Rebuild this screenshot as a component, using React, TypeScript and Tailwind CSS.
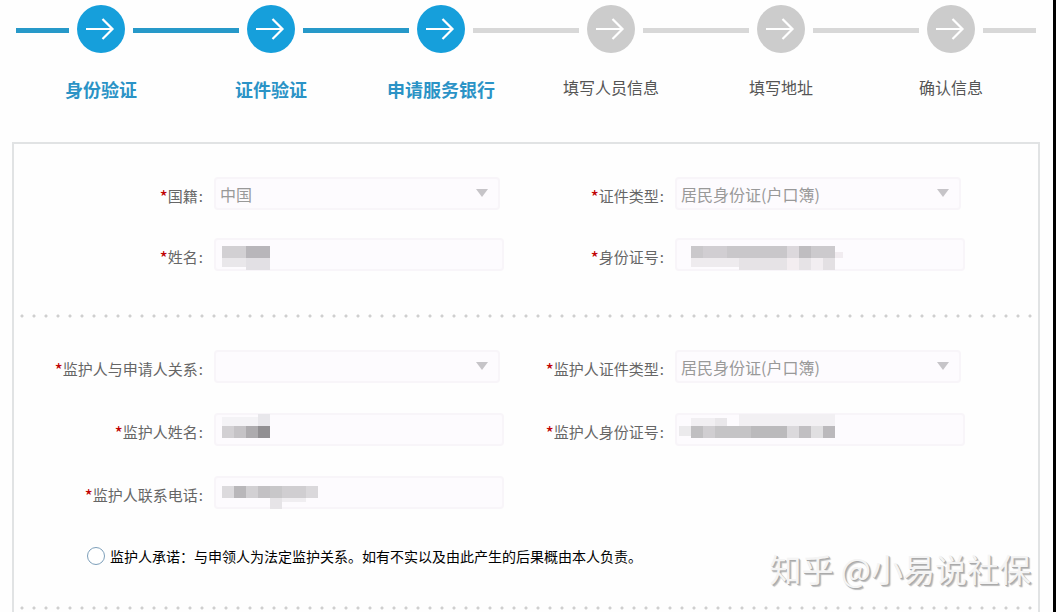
import { useState } from "react";
import clsx from "clsx";

interface Step {
  label: string;
  done: boolean;
}

// x, y, width, height, fill
type Block = [number, number, number, number, string];

const steps: Step[] = [
  { label: "身份验证", done: true },
  { label: "证件验证", done: true },
  { label: "申请服务银行", done: true },
  { label: "填写人员信息", done: false },
  { label: "填写地址", done: false },
  { label: "确认信息", done: false },
];

const nameMask: Block[] = [
  [8, 8, 24, 12, "#d2d0d3"],
  [32, 8, 24, 12, "#b8b6ba"],
  [8, 20, 24, 9, "#e9e7ea"],
  [32, 20, 24, 12, "#e2e0e4"],
];

const idMask: Block[] = [
  [16, 8, 12, 12, "#cac8cb"],
  [28, 8, 24, 12, "#d1ced2"],
  [52, 8, 60, 12, "#c9c7ca"],
  [112, 8, 12, 12, "#dcd8dc"],
  [124, 8, 12, 12, "#bfbdc0"],
  [136, 8, 24, 12, "#cccacd"],
  [160, 14, 8, 6, "#f1ecf0"],
  [16, 20, 48, 9, "#eeebee"],
  [64, 20, 48, 12, "#e6e3e6"],
  [112, 20, 12, 12, "#f3edf0"],
  [124, 20, 12, 12, "#e6e3e6"],
  [136, 20, 12, 12, "#f2eef1"],
  [148, 20, 12, 12, "#e3e0e3"],
];

const guardianNameMask: Block[] = [
  [8, 4, 36, 9, "#f4f3f6"],
  [44, 1, 12, 12, "#e8e7eb"],
  [8, 13, 12, 12, "#d2d0d3"],
  [20, 13, 12, 12, "#c5c3c6"],
  [32, 13, 12, 12, "#adabae"],
  [44, 13, 12, 12, "#918f92"],
];

const guardianIdMask: Block[] = [
  [16, 5, 24, 8, "#f1eff2"],
  [40, 5, 12, 8, "#e9e7ea"],
  [64, 1, 96, 12, "#f2f0f3"],
  [4, 13, 12, 10, "#ebeaec"],
  [16, 13, 12, 12, "#c0bfc1"],
  [28, 13, 12, 12, "#d0ced1"],
  [40, 13, 36, 12, "#c5c4c6"],
  [76, 13, 36, 12, "#bbbabc"],
  [112, 13, 12, 12, "#dbd9dc"],
  [124, 13, 12, 12, "#c1bfc2"],
  [136, 13, 12, 12, "#e0dfe1"],
  [148, 13, 12, 12, "#bbb9bc"],
];

const phoneMask: Block[] = [
  [8, 10, 12, 12, "#dcdadd"],
  [20, 10, 12, 12, "#b9b7ba"],
  [32, 10, 12, 12, "#d2d0d3"],
  [44, 10, 12, 12, "#c3c1c4"],
  [56, 10, 12, 12, "#c8c7c9"],
  [68, 10, 24, 12, "#d0ced1"],
  [92, 10, 12, 12, "#dad8db"],
  [56, 22, 12, 12, "#e6e4e7"],
  [68, 22, 24, 4, "#f0eef1"],
];

function StepLine({ active }: { active: boolean }) {
  return <span className={clsx("mt-[3px] h-[5px] flex-1", active ? "bg-[#2799c9]" : "bg-[#d8d8d8]")} />;
}

function StepItem({ step, nextDone }: { step: Step; nextDone: boolean }) {
  return (
    <li className="flex flex-col items-center">
      <div className="flex w-full items-center gap-2">
        <StepLine active={step.done} />
        <span
          className={clsx(
            "flex size-12 items-center justify-center rounded-full",
            step.done ? "bg-[#169fdb]" : "bg-[#cccccc]"
          )}
        >
          <svg viewBox="0 0 32 22" className="h-[22px] w-8" fill="none" stroke="#fff" strokeWidth="2.2">
            <path d="M1 11H27M17.5 1L27.5 11L17.5 21" />
          </svg>
        </span>
        <StepLine active={nextDone} />
      </div>
      <span
        className={clsx(
          step.done ? "mt-6 text-lg leading-6 font-bold text-[#2b93c6]" : "mt-[22px] text-base leading-6 text-[#555]"
        )}
      >
        {step.label}
      </span>
    </li>
  );
}

function FieldLabel({ htmlFor, text }: { htmlFor: string; text: string }) {
  return (
    <label
      htmlFor={htmlFor}
      className="flex justify-end pt-[5px] pr-[11px] text-[15px] leading-5 whitespace-nowrap text-[#666]"
    >
      <span className="text-lg leading-5 text-[#c00000]">*</span>
      <span className="pr-px">{text}</span>:
    </label>
  );
}

function SelectField({ id, label, value }: { id: string; label: string; value: string }) {
  return (
    <>
      <FieldLabel htmlFor={id} text={label} />
      <div className="relative mr-1">
        <select
          id={id}
          defaultValue={value}
          className="h-[33px] w-full appearance-none rounded-sm border-2 border-[#f8f5f9] bg-[#fdfbfe] px-1 text-base text-[#999] outline-none"
        >
          <option value={value}>{value}</option>
        </select>
        <svg viewBox="0 0 12 8" className="pointer-events-none absolute top-3 right-3 h-2 w-3" fill="#c6c4c8">
          <path d="M0 0H12L6 8Z" />
        </svg>
      </div>
    </>
  );
}

function MaskedField({ id, label, mask }: { id: string; label: string; mask: Block[] }) {
  return (
    <>
      <FieldLabel htmlFor={id} text={label} />
      <div className="relative">
        <input
          id={id}
          type="text"
          className="h-[33px] w-full rounded-sm border-2 border-[#f8f5f9] bg-[#fdfbfe] px-1 text-base text-[#999] outline-none"
        />
        <svg className="pointer-events-none absolute inset-0 h-full w-full" shapeRendering="crispEdges">
          {mask.map(([x, y, width, height, fill]) => (
            <rect key={`${x}-${y}`} x={x} y={y} width={width} height={height} fill={fill} />
          ))}
        </svg>
      </div>
    </>
  );
}

function DottedDivider() {
  return (
    <hr className="mx-0.5 h-1 border-0 bg-[radial-gradient(circle,#cfcfcf_1px,transparent_2px)] bg-[length:12px_4px]" />
  );
}

export default function App() {
  const [agreed, setAgreed] = useState(false);

  return (
    <main className="relative flex min-h-screen flex-col border-r-[3px] border-black bg-[#fefefe] pt-[5px] font-['Noto_Sans_CJK_SC',sans-serif]">
      {/* Progress */}
      <ol className="grid grid-cols-6 pr-[17px] pl-4">
        {steps.map((step, i) => (
          <StepItem key={step.label} step={step} nextDone={steps[i + 1]?.done ?? false} />
        ))}
      </ol>

      <form className="mt-[41px] mr-[13px] ml-3 flex-1 border-2 border-b-0 border-[#e1e3e4] bg-[#fefefe]">
        {/* Applicant */}
        <div className="grid grid-cols-[200px_1fr_171px_1fr] items-center gap-y-7 pt-[33px] pr-[73px]">
          <SelectField id="nationality" label="国籍" value="中国" />
          <SelectField id="idType" label="证件类型" value="居民身份证(户口簿)" />
          <MaskedField id="name" label="姓名" mask={nameMask} />
          <MaskedField id="idNumber" label="身份证号" mask={idMask} />
        </div>

        <div className="pt-[43px] pb-8">
          <DottedDivider />
        </div>

        {/* Guardian */}
        <div className="grid grid-cols-[200px_1fr_171px_1fr] items-center gap-y-[30px] pr-[73px]">
          <SelectField id="relation" label="监护人与申请人关系" value="" />
          <SelectField id="guardianIdType" label="监护人证件类型" value="居民身份证(户口簿)" />
          <MaskedField id="guardianName" label="监护人姓名" mask={guardianNameMask} />
          <MaskedField id="guardianIdNumber" label="监护人身份证号" mask={guardianIdMask} />
          <MaskedField id="guardianPhone" label="监护人联系电话" mask={phoneMask} />
        </div>

        <label className="mt-[38px] ml-[73px] flex items-center gap-[5px] text-sm leading-[18px] text-black">
          <input
            type="radio"
            name="promise"
            checked={agreed}
            onChange={() => setAgreed(true)}
            className="size-[18px] shrink-0 appearance-none rounded-full border border-[#7d9fba] bg-white checked:border-[5px]"
          />
          监护人承诺：与申领人为法定监护关系。如有不实以及由此产生的后果概由本人负责。
        </label>

        <div className="pt-[41px]">
          <DottedDivider />
        </div>
      </form>

      {/* Watermark */}
      <p className="pointer-events-none absolute right-[22px] bottom-6 text-[32px] leading-10 whitespace-nowrap text-[#f4f4f4] [text-shadow:1px_1px_0_#aaa,2px_2px_1px_#bbb]">
        知乎 @小易说社保
      </p>
    </main>
  );
}
